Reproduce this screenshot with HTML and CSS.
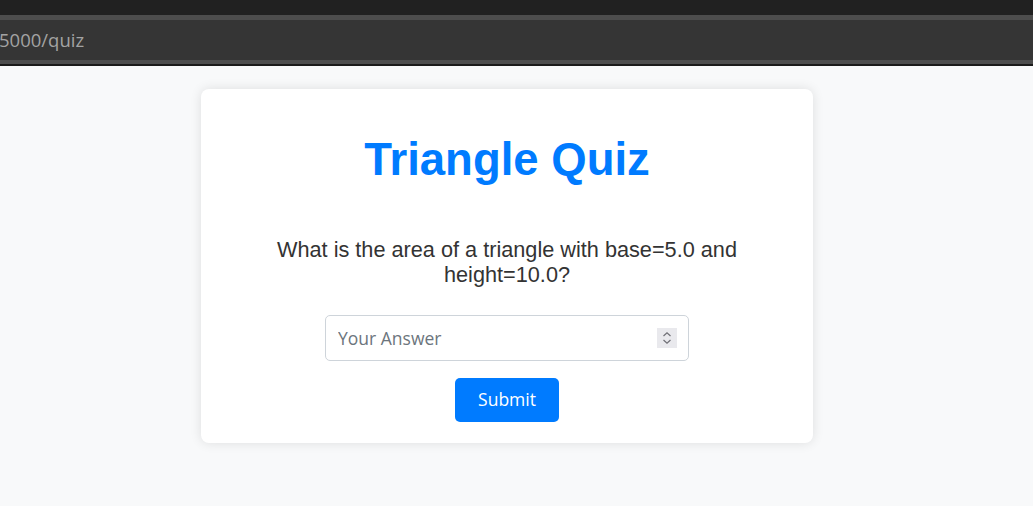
FILE: index.html
```html
<!DOCTYPE html>
<html lang="en">
<head>
<meta charset="utf-8">
<title>Triangle Quiz</title>
<link rel="stylesheet" href="styles.css">
</head>
<body>
<header class="chrome">
  <div class="chrome-top"></div>
  <div class="address-bar"><span class="url">5000/quiz</span></div>
</header>
<main class="page">
  <section class="card">
    <h1 class="title">Triangle Quiz</h1>
    <p class="question">What is the area of a triangle with base=5.0 and height=10.0?</p>
    <form class="quiz-form">
      <div class="input-wrap">
        <input class="answer" type="text" placeholder="Your Answer">
        <span class="spinner">
          <svg width="20" height="20" viewBox="0 0 20 20">
            <path d="M6.5 8 L10 4.8 L13.5 8" fill="none" stroke="#6f6f75" stroke-width="1.2"/>
            <path d="M6.5 12 L10 15.2 L13.5 12" fill="none" stroke="#6f6f75" stroke-width="1.2"/>
          </svg>
        </span>
      </div>
      <button class="submit" type="button">Submit</button>
    </form>
  </section>
</main>
</body>
</html>
```
FILE: styles.css
```css
html, body {
  margin: 0;
  padding: 0;
}
body {
  background: #f8f9fa;
  font-family: "Liberation Sans", Arial, sans-serif;
  height: 506px;
  overflow: hidden;
}
.chrome {
  background: #1a1a1a;
  padding-bottom: 2px;
}
.chrome-top {
  height: 15px;
  background: #212121;
}
.address-bar {
  height: 40px;
  background: #353535;
  border-top: 5px solid #4d4d4d;
  border-bottom: 4px solid #4d4d4d;
  display: flex;
  align-items: center;
}
.url {
  font-family: "Open Sans", sans-serif;
  font-size: 18.5px;
  color: #a3a3a3;
  margin-left: -1px;
  line-height: 1;
}
.page {
  padding-top: 23px;
}
.card {
  width: 612px;
  box-sizing: border-box;
  margin-left: 201px;
  background: #fff;
  border-radius: 8px;
  box-shadow: 0 0 12px rgba(0, 0, 0, 0.11);
  padding: 20px 40px 21px;
  text-align: center;
}
.title {
  margin: 25px 0 0;
  font-size: 45.5px;
  line-height: 52px;
  font-weight: bold;
  color: #007bff;
}
.question {
  margin: 51px 0 28px;
  font-size: 21.7px;
  line-height: 25px;
  color: #333;
}
.quiz-form {
  display: flex;
  flex-direction: column;
  align-items: center;
  gap: 17px;
}
.input-wrap {
  position: relative;
  width: 364px;
  height: 46px;
}
.answer {
  width: 100%;
  height: 100%;
  box-sizing: border-box;
  border: 1px solid #ced4da;
  border-radius: 5px;
  padding: 0 12px;
  font-family: "Open Sans", sans-serif;
  font-size: 17.5px;
  color: #495057;
  background: #fff;
  outline: none;
}
.answer::placeholder {
  color: #6c757d;
}
.spinner {
  position: absolute;
  right: 12px;
  top: 13px;
  width: 20px;
  height: 20px;
  background: #e9e9ed;
  display: block;
}
.spinner svg {
  display: block;
}
.submit {
  width: 104px;
  height: 44px;
  border: none;
  border-radius: 5px;
  background: #007bff;
  color: #fff;
  font-family: "Open Sans", sans-serif;
  font-size: 17.5px;
  line-height: 1;
  padding: 0;
  cursor: pointer;
}
```
